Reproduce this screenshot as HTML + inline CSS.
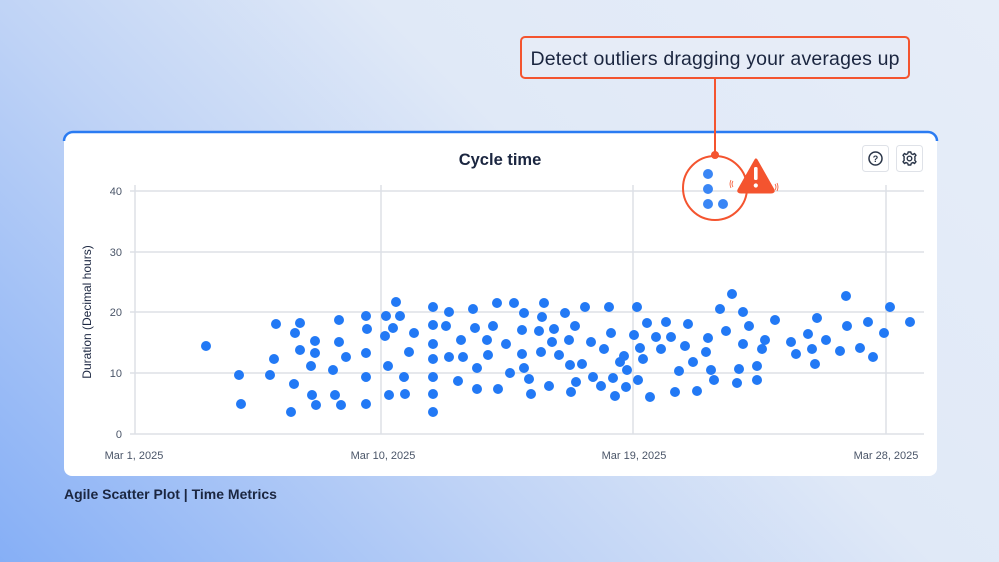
<!DOCTYPE html>
<html><head><meta charset="utf-8"><style>
body{margin:0;width:999px;height:562px;overflow:hidden;font-family:"Liberation Sans",sans-serif;
background:linear-gradient(45deg,#86aff6 0%,#bfd3f6 35%,#e0e9f7 60%,#e6edf8 100%);}
</style></head><body>
<svg width="999" height="562" viewBox="0 0 999 562" xmlns="http://www.w3.org/2000/svg" style="position:absolute;left:0;top:0">
<rect x="64" y="131" width="873" height="345" rx="8" fill="#fff"/>
<path d="M64 141 a9 9 0 0 1 9 -9 H928 a9 9 0 0 1 9 9" fill="none" stroke="#2a7bf2" stroke-width="2.5"/>
<text x="500" y="165" text-anchor="middle" font-size="16.5" font-weight="bold" fill="#1b2640">Cycle time</text>
<rect x="862.5" y="145.5" width="26" height="26" rx="3" fill="#fff" stroke="#dfe2e8"/>
<circle cx="875.5" cy="158.5" r="6.5" fill="none" stroke="#2a3548" stroke-width="1.5"/>
<text x="875.5" y="162" text-anchor="middle" font-size="9" font-weight="bold" fill="#2a3548">?</text>
<rect x="896.5" y="145.5" width="26" height="26" rx="3" fill="#fff" stroke="#dfe2e8"/>
<g transform="translate(909.5,158.5)" fill="none" stroke="#2a3548" stroke-width="1.4">
<circle r="2.3"/>
<path d="M-1.3 -6.5 L1.3 -6.5 L1.8 -4.8 L3.5 -4 L5 -5 L6.5 -3.2 L5.3 -1.8 L5.5 0 L5.3 1.8 L6.5 3.2 L5 5 L3.5 4 L1.8 4.8 L1.3 6.5 L-1.3 6.5 L-1.8 4.8 L-3.5 4 L-5 5 L-6.5 3.2 L-5.3 1.8 L-5.5 0 L-5.3 -1.8 L-6.5 -3.2 L-5 -5 L-3.5 -4 L-1.8 -4.8 Z" stroke-linejoin="round"/>
</g>
<g stroke="#dde0e6" stroke-width="1.5">
<line x1="130" y1="191" x2="924" y2="191"/><line x1="130" y1="252" x2="924" y2="252"/>
<line x1="130" y1="312" x2="924" y2="312"/><line x1="130" y1="373" x2="924" y2="373"/>
<line x1="130" y1="434" x2="924" y2="434"/>
<line x1="135" y1="185" x2="135" y2="434"/><line x1="381" y1="185" x2="381" y2="434"/>
<line x1="633" y1="185" x2="633" y2="434"/><line x1="886" y1="185" x2="886" y2="434"/>
</g>
<g font-size="11" fill="#4a5568" text-anchor="end">
<text x="122" y="195">40</text><text x="122" y="256">30</text><text x="122" y="316">20</text><text x="122" y="377">10</text><text x="122" y="438">0</text>
</g>
<g font-size="11" fill="#4a5568" text-anchor="middle">
<text x="134" y="459">Mar 1, 2025</text><text x="383" y="459">Mar 10, 2025</text><text x="634" y="459">Mar 19, 2025</text><text x="886" y="459">Mar 28, 2025</text>
</g>
<text transform="translate(91,312) rotate(-90)" text-anchor="middle" font-size="12" fill="#1b2640">Duration (Decimal hours)</text>
<g fill="#2279f5" id="d"></g>
<circle cx="715" cy="188" r="32" fill="none" stroke="#f4542f" stroke-width="2"/>
<line x1="715" y1="78" x2="715" y2="155" stroke="#f4542f" stroke-width="2"/>
<circle cx="715" cy="155" r="4" fill="#f4542f"/>
<g fill="#3a86f5"><circle cx="708" cy="174" r="5"/><circle cx="708" cy="189" r="5"/><circle cx="708" cy="204" r="5"/><circle cx="723" cy="204" r="5"/></g>
<path d="M756 160 L773 190 Q774 192 771 192 L741 192 Q738 192 739 190 Z" fill="#f4542f" stroke="#f4542f" stroke-width="3" stroke-linejoin="round"/>
<rect x="754" y="167" width="3.6" height="13" rx="1.5" fill="#fff"/><circle cx="755.8" cy="185.5" r="2.1" fill="#fff"/>
<g fill="none" stroke="#f4542f" stroke-width="0.8"><path d="M733 181 q-2 3 0 6 M731 180 q-2 4 0 8 M775 184 q2 3 0 6 M777 183 q2 4 0 8"/></g>
<rect x="521" y="37" width="388" height="41" rx="4" fill="#e6ecf7" stroke="#f4542f" stroke-width="2"/>
<text x="715" y="65" text-anchor="middle" font-size="19.5" textLength="369" fill="#1b2640">Detect outliers dragging your averages up</text>
<text x="64" y="499" font-size="14" font-weight="bold" fill="#1b2640">Agile Scatter Plot | Time Metrics</text>
</svg>
<script>
var p=[206,346,239,375,241,404,270,375,274,359,276,324,291,412,294,384,295,333,300,350,300,323,311,366,312,395,315,341,315,353,316,405,333,370,335,395,339,320,341,405,339,342,346,357,366,316,367,329,366,353,366,377,366,404,385,336,386,316,388,366,389,395,393,328,396,302,400,316,404,377,405,394,409,352,414,333,433,307,433,325,433,344,433,359,433,377,433,394,433,412,446,326,449,312,449,357,458,381,461,340,463,357,473,309,475,328,477,368,477,389,487,340,488,355,493,326,497,303,498,389,506,344,510,373,514,303,522,330,522,354,524,313,524,368,529,379,531,394,539,331,541,352,542,317,544,303,549,386,552,342,554,329,559,355,565,313,569,340,570,365,571,392,575,326,576,382,582,364,585,307,591,342,593,377,601,386,604,349,609,307,611,333,613,378,615,396,620,362,624,356,626,387,627,370,634,335,637,307,638,380,640,348,643,359,647,323,650,397,656,337,661,349,666,322,671,337,675,392,679,371,685,346,688,324,693,362,697,391,706,352,708,338,711,370,714,380,720,309,726,331,732,294,737,383,739,369,743,312,743,344,749,326,757,366,757,380,762,349,765,340,775,320,791,342,796,354,808,334,812,349,815,364,817,318,826,340,840,351,846,296,847,326,860,348,868,322,873,357,884,333,890,307,910,322];
var g=document.getElementById('d'),s='';
for(var i=0;i<p.length;i+=2)s+='<circle cx="'+p[i]+'" cy="'+p[i+1]+'" r="5"/>';
g.innerHTML=s;
</script>
</body></html>
